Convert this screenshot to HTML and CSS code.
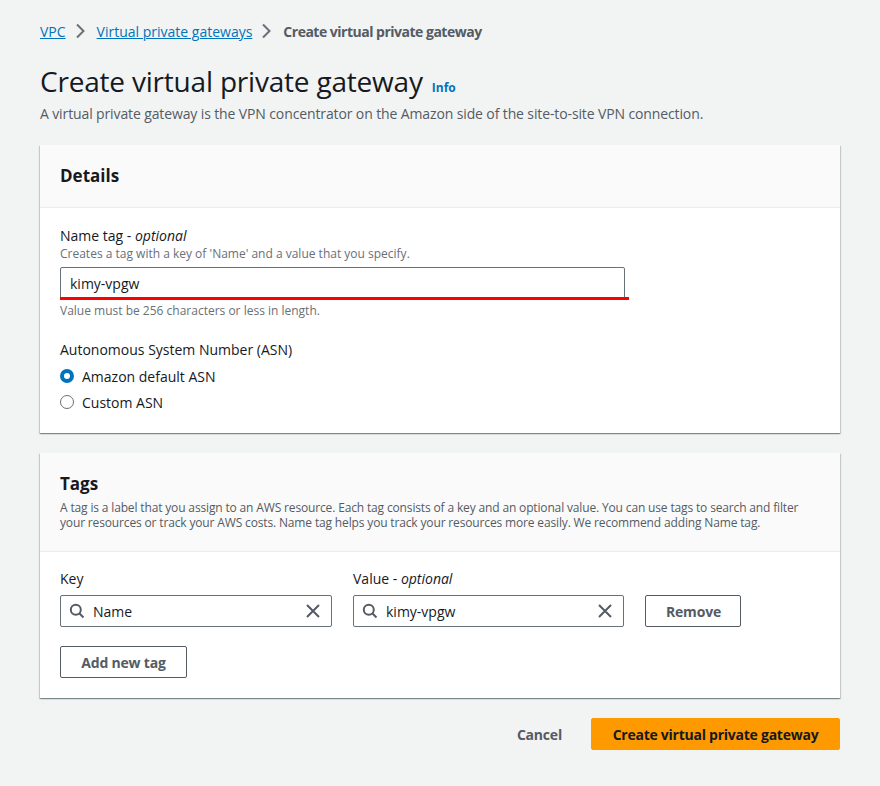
FILE: index.html
```html
<!DOCTYPE html>
<html>
<head>
<meta charset="utf-8">
<link rel="stylesheet" href="styles.css">
</head>
<body>
<div class="page">
  <nav class="crumbs">
    <a class="crumb-link">VPC</a>
    <svg class="chev" width="16" height="16" viewBox="0 0 16 16"><path d="M5 1.5l6.5 6.5-6.5 6.5" fill="none" stroke="#687078" stroke-width="2"/></svg>
    <a class="crumb-link">Virtual private gateways</a>
    <svg class="chev" width="16" height="16" viewBox="0 0 16 16"><path d="M5 1.5l6.5 6.5-6.5 6.5" fill="none" stroke="#687078" stroke-width="2"/></svg>
    <span class="crumb-current">Create virtual private gateway</span>
  </nav>

  <div class="head">
    <h1 class="title">Create virtual private gateway</h1>
    <a class="info">Info</a>
  </div>
  <p class="subtitle">A virtual private gateway is the VPN concentrator on the Amazon side of the site-to-site VPN connection.</p>

  <section class="card">
    <div class="card-head">
      <h2 class="card-title">Details</h2>
    </div>
    <div class="card-body">
      <div class="field">
        <div class="label">Name tag - <i>optional</i></div>
        <div class="desc">Creates a tag with a key of 'Name' and a value that you specify.</div>
        <div class="input name-input"><span class="val">kimy-vpgw</span></div>
        <div class="desc hint">Value must be 256 characters or less in length.</div>
      </div>
      <div class="field asn">
        <div class="label">Autonomous System Number (ASN)</div>
        <div class="radio-row"><span class="radio on"></span><span class="radio-text">Amazon default ASN</span></div>
        <div class="radio-row"><span class="radio"></span><span class="radio-text">Custom ASN</span></div>
      </div>
    </div>
  </section>

  <section class="card tags">
    <div class="card-head tags-head">
      <h2 class="card-title">Tags</h2>
      <p class="tags-desc">A tag is a label that you assign to an AWS resource. Each tag consists of a key and an optional value. You can use tags to search and filter your resources or track your AWS costs. Name tag helps you track your resources more easily. We recommend adding Name tag.</p>
    </div>
    <div class="card-body tags-body">
      <div class="tag-row">
        <div class="tag-col key-col">
          <div class="label">Key</div>
          <div class="input search">
            <svg class="mag" width="16" height="16" viewBox="0 0 16 16"><circle cx="6.8" cy="6.8" r="5" fill="none" stroke="#545b64" stroke-width="2"/><path d="M10.5 10.5l4 4" stroke="#545b64" stroke-width="2"/></svg>
            <span class="val">Name</span>
            <svg class="x" width="16" height="16" viewBox="0 0 16 16"><path d="M2 2l12 12M14 2L2 14" stroke="#545b64" stroke-width="2"/></svg>
          </div>
        </div>
        <div class="tag-col val-col">
          <div class="label">Value - <i>optional</i></div>
          <div class="input search">
            <svg class="mag" width="16" height="16" viewBox="0 0 16 16"><circle cx="6.8" cy="6.8" r="5" fill="none" stroke="#545b64" stroke-width="2"/><path d="M10.5 10.5l4 4" stroke="#545b64" stroke-width="2"/></svg>
            <span class="val">kimy-vpgw</span>
            <svg class="x" width="16" height="16" viewBox="0 0 16 16"><path d="M2 2l12 12M14 2L2 14" stroke="#545b64" stroke-width="2"/></svg>
          </div>
        </div>
        <button class="btn remove">Remove</button>
      </div>
      <button class="btn add">Add new tag</button>
    </div>
  </section>

  <div class="actions">
    <button class="link-btn">Cancel</button>
    <button class="primary">Create virtual private gateway</button>
  </div>
</div>
</body>
</html>
```

FILE: styles.css
```css
* { box-sizing: border-box; }
html, body { margin: 0; padding: 0; }
body {
  background: #f2f3f3;
  font-family: "Open Sans", "Noto Sans", sans-serif;
  color: #16191f;
  width: 880px;
  height: 786px;
  overflow: hidden;
}
.page { padding: 20px 40px 0 40px; }

.crumbs { display: flex; align-items: center; height: 22px; font-size: 14px; }
.crumb-link { color: #0073bb; text-decoration: underline; }
.chev { margin: 0 9px 0 6px; }
.crumb-current { color: #545b64; font-weight: 700; letter-spacing: -0.5px; }

.head { display: flex; align-items: baseline; margin-top: 19px; }
.title { margin: 0; font-size: 28px; font-weight: 400; line-height: 40px; color: #16191f; letter-spacing: -0.2px; }
.info { color: #0073bb; font-size: 12px; font-weight: 700; margin-left: 9px; }
.subtitle { margin: 2px 0 0; font-size: 14px; line-height: 22px; color: #545b64; letter-spacing: -0.12px; }

.card {
  margin-top: 20px;
  background: #fff;
  box-shadow: 0 1px 1px 0 rgba(0,28,36,.3), 1px 1px 1px 0 rgba(0,28,36,.15), -1px 1px 1px 0 rgba(0,28,36,.15);
}
.card-head {
  background: #fafafa;
  border-bottom: 1px solid #eaeded;
  padding: 18px 20px 19px;
}
.card-title { margin: 0; font-size: 17px; font-weight: 700; line-height: 25px; color: #16191f; }
.card-body { padding: 18px 20px 18px; }

.field { display: flex; flex-direction: column; }
.label { font-size: 14px; line-height: 20px; color: #16191f; }
.label i { font-style: italic; }
.desc { font-size: 12px; line-height: 16px; color: #687078; }
.input {
  height: 32px;
  border: 1px solid #aab7b8;
  border-radius: 2px;
  display: flex;
  align-items: center;
  padding: 0 9px;
  font-size: 14px;
  color: #16191f;
}
.name-input {
  width: 565px;
  margin-top: 5px;
  border-color: #687078;
  position: relative;
}
.name-input::after {
  content: "";
  position: absolute;
  left: -1px;
  right: -5px;
  bottom: -2px;
  height: 3px;
  background: #ff0000;
}
.hint { margin-top: 4px; }

.asn { margin-top: 21px; }
.asn .label { margin-bottom: 3px; }
.radio-row { display: flex; align-items: center; height: 26px; }
.radio {
  width: 14px; height: 14px; border-radius: 50%;
  border: 1.5px solid #687078;
  margin-right: 8px;
  background: #fff;
}
.radio.on { border: 4px solid #0073bb; }
.radio-text { font-size: 14px; color: #16191f; }

.tags { margin-top: 20px; }
.tags-head { padding: 18px 20px 21px; }
.tags-desc {
  margin: 4px 0 0;
  font-size: 12px;
  line-height: 15px;
  color: #545b64;
  letter-spacing: -0.15px;
}
.tags-body { padding: 17px 20px 20px; }
.tag-row { display: flex; align-items: flex-end; gap: 21px; }
.tag-col { display: flex; flex-direction: column; }
.tag-col .label { margin-bottom: 6px; }
.key-col { width: 272px; }
.val-col { width: 271px; }
.search { border-color: #687078; padding: 0 10px 0 8px; }
.mag { flex: none; margin-right: 8px; }
.search .val { flex: 1; }
.x { flex: none; }

.btn {
  font-family: inherit;
  background: #fff;
  border: 1px solid #545b64;
  border-radius: 2px;
  color: #545b64;
  font-weight: 700;
  font-size: 14px;
  height: 32px;
  padding: 0 20px;
  cursor: pointer;
  letter-spacing: -0.2px;
}
.remove { width: 96px; }
.add { margin-top: 19px; width: 127px; padding: 0; }

.actions { display: flex; justify-content: flex-end; align-items: center; margin-top: 20px; gap: 29px; }
.link-btn {
  background: none; border: none; font-family: inherit;
  font-size: 14px; font-weight: 700; color: #545b64; padding: 0;
  letter-spacing: -0.2px;
}
.primary {
  font-family: inherit;
  background: #ff9900;
  border: 1px solid #ff9900;
  border-radius: 2px;
  color: #16191f;
  font-weight: 700;
  font-size: 14px;
  height: 32px;
  width: 249px;
  letter-spacing: -0.25px;
}
```
